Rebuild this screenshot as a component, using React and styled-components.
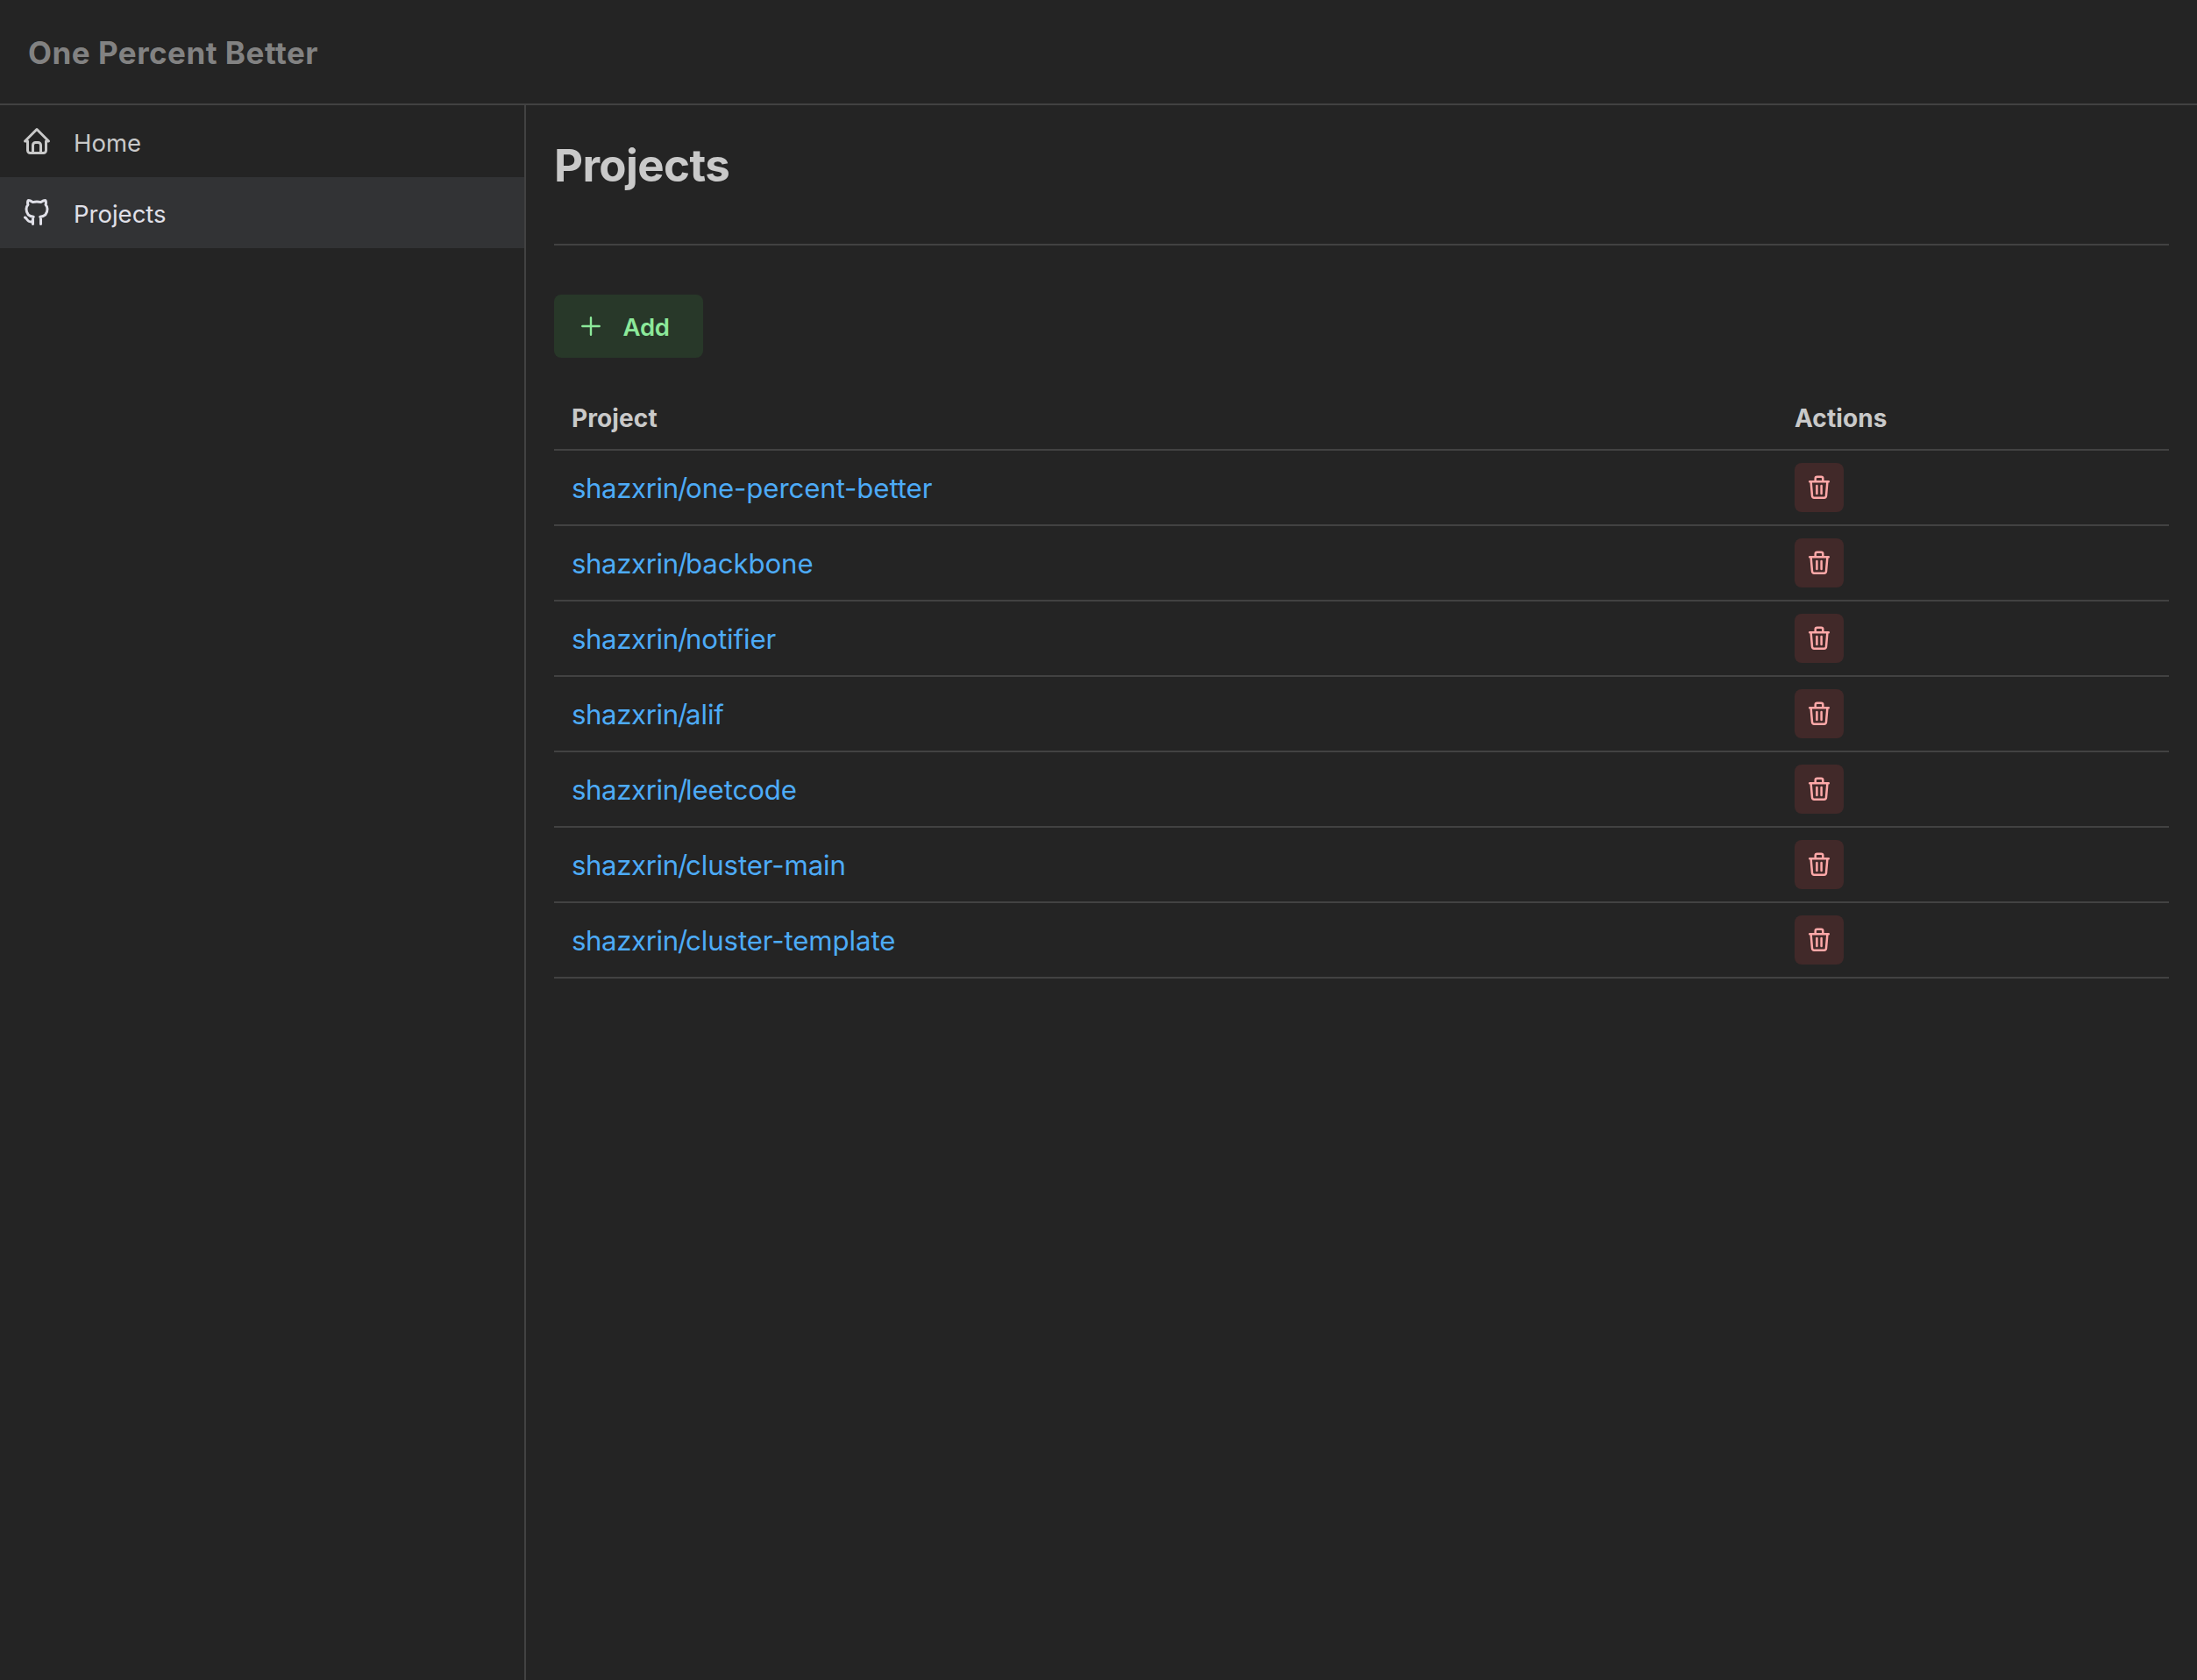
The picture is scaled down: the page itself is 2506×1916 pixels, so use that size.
import React from 'react';
import styled, { createGlobalStyle } from 'styled-components';

const GlobalStyle = createGlobalStyle`
  * { box-sizing: border-box; }
  body {
    margin: 0;
    background: #242424;
    color: #c9c9c9;
    font-family: Inter, "Noto Sans", sans-serif;
    font-feature-settings: "calt" 0;
  }
`;

const Shell = styled.div`
  display: flex;
  flex-direction: column;
  height: 1916px;
`;

const Header = styled.header`
  display: flex;
  align-items: center;
  height: 120px;
  padding: 1px 32px 0;
  border-bottom: 2px solid #424242;
`;

const Brand = styled.h4`
  margin: 0;
  font-size: 35px;
  line-height: 52px;
  font-weight: 700;
  letter-spacing: 0.5px;
  color: #828282;
`;

const Body = styled.div`
  display: flex;
  flex: 1;
`;

const Sidebar = styled.nav`
  width: 600px;
  border-right: 2px solid #424242;
`;

const NavItem = styled.a`
  display: flex;
  align-items: center;
  gap: 24px;
  height: 81.5px;
  padding: 0 24px;
  color: ${(p) => (p.$active ? '#e0e0e8' : '#c9c9c9')};
  background: ${(p) => (p.$active ? '#323335' : 'transparent')};
`;

const NavLabel = styled.span`
  padding-top: 5px;
  font-size: 27.5px;
  line-height: 43px;
`;

const Main = styled.main`
  flex: 1;
  padding: 32px;
`;

const Title = styled.h1`
  margin: 0;
  padding-top: 2px;
  height: 126px;
  font-size: 51px;
  line-height: 70px;
  font-weight: 700;
  letter-spacing: -0.6px;
`;

const Divider = styled.hr`
  margin: 0 0 56px;
  border: 0;
  height: 2px;
  background: #424242;
`;

const AddButton = styled.button`
  display: flex;
  align-items: center;
  gap: 22.5px;
  width: 170px;
  height: 72px;
  padding: 0 28px;
  border: 0;
  border-radius: 8px;
  background: #283829;
  color: #8ce99a;
  font: inherit;
  font-size: 27.5px;
  font-weight: 600;
  letter-spacing: -0.2px;
`;

const AddLabel = styled.span`
  padding-top: 1px;
`;

const Table = styled.table`
  width: 100%;
  margin-top: 32px;
  border-collapse: separate;
  border-spacing: 0;
  table-layout: fixed;
`;

const HeadCell = styled.th`
  height: 74px;
  padding: 2px 20px 0;
  border-bottom: 2px solid #424242;
  text-align: left;
  font-size: 28px;
  font-weight: 700;
  letter-spacing: 0.1px;
  width: ${(p) => p.$width || 'auto'};
`;

const Cell = styled.td`
  height: 86px;
  padding: ${(p) => (p.$text ? '2px 20px 0' : '0 20px')};
  border-bottom: 2px solid #424242;
`;

const ProjectLink = styled.a`
  font-size: 31.2px;
  line-height: 50px;
  letter-spacing: -0.1px;
  color: #4dabf7;
`;

const Owner = styled.span`
  letter-spacing: -0.4px;
`;

const Slash = styled.span`
  margin: 0 -2.2px 0 -0.6px;
`;

const DeleteButton = styled.button`
  display: flex;
  align-items: center;
  justify-content: center;
  width: 56px;
  height: 56px;
  padding: 0;
  border: 0;
  border-radius: 8px;
  background: #412929;
  color: #ffa8a8;
`;

const Icon = styled.svg`
  display: block;
  flex: none;
  width: ${(p) => p.$size}px;
  height: ${(p) => p.$size}px;
  fill: none;
  stroke: currentColor;
  stroke-width: ${(p) => p.$stroke || 2};
  stroke-linecap: round;
  stroke-linejoin: round;
`;

const HomeIcon = () => (
  <Icon viewBox="0 0 24 24" $size={36}>
    <path d="M5 12H3l9-9 9 9h-2M5 12v7a2 2 0 0 0 2 2h10a2 2 0 0 0 2-2v-7" />
    <path d="M9 21v-6a2 2 0 0 1 2-2h2a2 2 0 0 1 2 2v6" />
  </Icon>
);

const GithubIcon = () => (
  <Icon viewBox="0 0 24 24" $size={36}>
    <path d="M9 19c-4.3 1.4-4.3-2.5-6-3m12 5v-3.5c0-1 .1-1.4-.5-2 2.8-.3 5.5-1.4 5.5-6a4.6 4.6 0 0 0-1.3-3.2 4.2 4.2 0 0 0-.1-3.2s-1.1-.3-3.5 1.3a12.3 12.3 0 0 0-6.2 0C6.5 2.8 5.4 3.1 5.4 3.1a4.2 4.2 0 0 0-.1 3.2A4.6 4.6 0 0 0 4 9.5c0 4.6 2.7 5.7 5.5 6-.6.6-.6 1.2-.5 2V21" />
  </Icon>
);

const PlusIcon = () => (
  <Icon viewBox="0 0 28 28" $size={28} $stroke={2.4}>
    <path d="M14 4.300v19.400M4.300 14h19.400" />
  </Icon>
);

const TrashIcon = () => (
  <Icon viewBox="0 0 28 28" $size={28} $stroke={2.5}>
    <path d="M3.200 7.200h21.600M4.600 7.200l1.400 16.300a2.200 2.200 0 0 0 2.200 2.200h11.600a2.200 2.200 0 0 0 2.200-2.200l1.400-16.300M9.700 7V3.700a2 2 0 0 1 2-2h4.600a2 2 0 0 1 2 2V7M11.400 12v9.100M16.600 12v9.100" />
  </Icon>
);

const projects = [
  'shazxrin/one-percent-better',
  'shazxrin/backbone',
  'shazxrin/notifier',
  'shazxrin/alif',
  'shazxrin/leetcode',
  'shazxrin/cluster-main',
  'shazxrin/cluster-template',
];

function ProjectRow({ name }) {
  const [owner, repo] = name.split('/');
  return (
    <tr>
      <Cell $text>
        <ProjectLink><Owner>{owner}</Owner><Slash>/</Slash>{repo}</ProjectLink>
      </Cell>
      <Cell>
        <DeleteButton aria-label="Delete"><TrashIcon /></DeleteButton>
      </Cell>
    </tr>
  );
}

export default function App() {
  return (
    <Shell>
      <GlobalStyle />
      <Header>
        <Brand>One Percent Better</Brand>
      </Header>
      <Body>
        <Sidebar>
          <NavItem><HomeIcon /><NavLabel>Home</NavLabel></NavItem>
          <NavItem $active><GithubIcon /><NavLabel>Projects</NavLabel></NavItem>
        </Sidebar>
        <Main>
          <Title>Projects</Title>
          <Divider />
          <AddButton><PlusIcon /><AddLabel>Add</AddLabel></AddButton>
          <Table>
            <thead>
              <tr>
                <HeadCell>Project</HeadCell>
                <HeadCell $width="447px">Actions</HeadCell>
              </tr>
            </thead>
            <tbody>
              {projects.map((name) => (
                <ProjectRow key={name} name={name} />
              ))}
            </tbody>
          </Table>
        </Main>
      </Body>
    </Shell>
  );
}
